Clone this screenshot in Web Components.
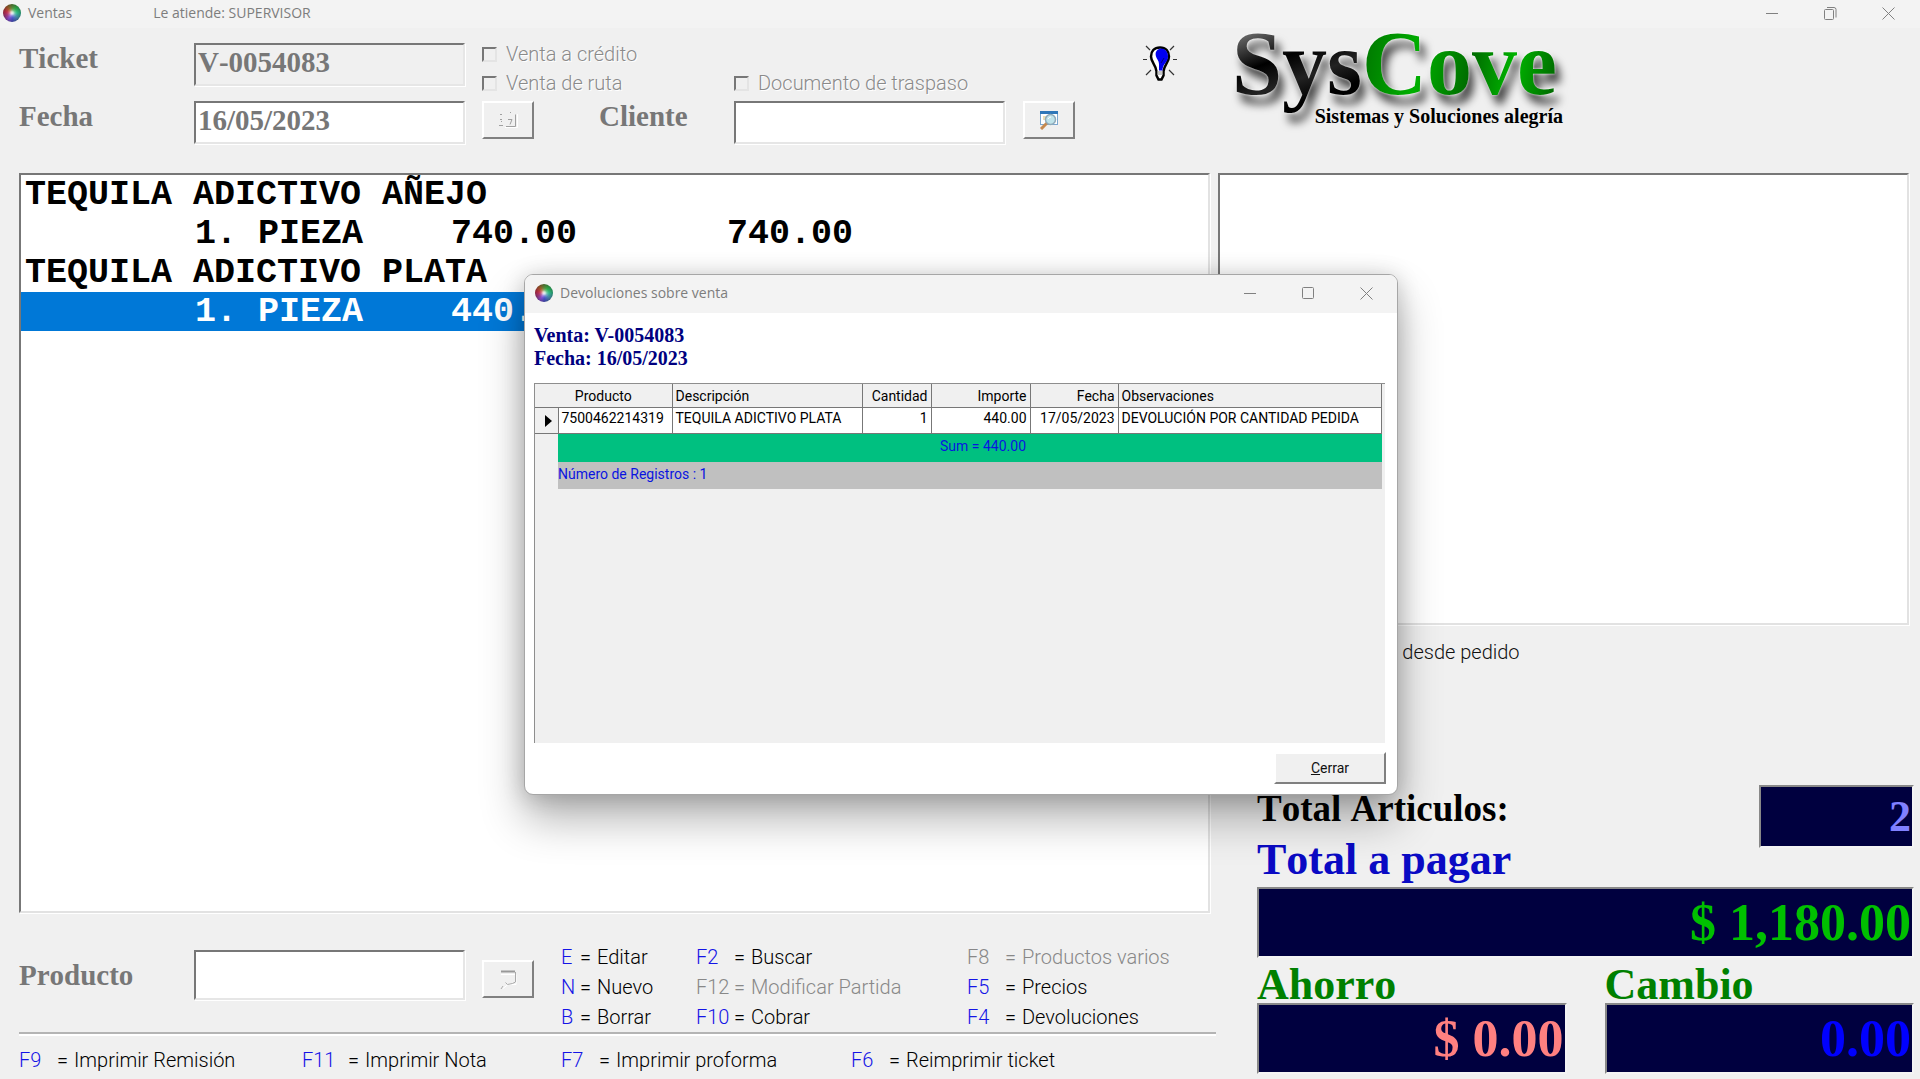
<!DOCTYPE html>
<html lang="es">
<head>
<meta charset="utf-8">
<title>Ventas</title>
<style>
  html, body { margin: 0; height: 100%; }
  body { background: #f0f0f0; font-family: Roboto, "Liberation Sans", sans-serif; color: #111; }
</style>
</head>
<body>
<sales-app></sales-app>

<script>
const define = (name, html, setup) => {
  const tpl = document.createElement('template');
  tpl.innerHTML = html;
  customElements.define(name, class extends HTMLElement {
    connectedCallback() {
      if (this.shadowRoot) return;
      this.attachShadow({ mode: 'open' }).append(tpl.content.cloneNode(true));
      if (setup) setup(this, this.shadowRoot);
    }
  });
};

/* Round colour wheel used as the application icon */
define('color-wheel', `
<style>
  :host { display: block; width: 18px; height: 18px; flex: none; border-radius: 50%;
    background: radial-gradient(circle, #ffffffcc 0 1px, #ffffff44 3px, transparent 5px, #0004 9px),
      conic-gradient(#5a8a3a, #2fae4c 40deg, #2fb98a 90deg, #4a8fb0 130deg, #4a52c8 175deg, #8a4fd0 210deg, #a03a80 245deg, #c0304a 280deg, #a85a2a 320deg, #5a8a3a); }
</style>`);

/* Title bar with icon, captions and window controls */
define('win-bar', `
<style>
  :host { display: flex; align-items: center; height: var(--bar-h, 26px); padding: 0 var(--bar-pad, 25px) 2px var(--bar-left, 3px);
    background: #f3f3f3; color: #7d7d7d; font: 14px/18px "Open Sans", "Noto Sans", sans-serif; flex: none; }
  .texts { display: flex; flex: 1; gap: 81px; margin-left: 7px; }
  .controls { display: flex; gap: 45px; }
  button { all: unset; width: 13px; height: 13px; display: block; }
  svg { display: block; width: 13px; height: 13px; fill: none; stroke: #808080; stroke-width: 1; }
</style>
<color-wheel></color-wheel>
<div class="texts"><slot></slot></div>
<div class="controls">
  <button aria-label="Minimizar"><svg viewBox="0 0 13 13"><path d="M0 6.5H12"/></svg></button>
  <button class="mid" aria-label="Maximizar"></button>
  <button aria-label="Cerrar ventana"><svg viewBox="0 0 13 13"><path d="M.5.5l12 12M12.500.5l-12 12"/></svg></button>
</div>`, (host, root) => {
  root.querySelector('.mid').innerHTML = host.hasAttribute('restored')
    ? '<svg viewBox="0 0 13 13"><rect x=".5" y="2.500" width="9" height="10" rx="1"/><path d="M3 .5h7q2 0 2 2v8"/></svg>'
    : '<svg viewBox="0 0 13 13"><rect x=".5" y=".5" width="11" height="11" rx="1"/></svg>';
});

/* Label with a sunken text box */
define('sunken-field', `
<style>
  :host { display: flex; align-items: flex-start; }
  label { font: bold 29px/1 "Liberation Serif", serif; color: #777; font-kerning: none;
    width: var(--label-w, 175px); line-height: var(--label-h, 30px); flex: none; }
  input { box-sizing: border-box; width: 271px; height: var(--h, 43px); padding: 0 2px 5px; margin: 0; border-radius: 0;
    border: 2px solid; border-color: #777 #e6e6e6 #e6e6e6 #777; box-shadow: 1px 1px 0 #fff; background: #fff;
    font: bold 29px/33px "Liberation Serif", serif; color: #777; outline: none; font-kerning: none; }
  input.flat { background: #f0f0f0; }
</style>
<label for="f"></label><input id="f" type="text">`, (host, root) => {
  root.querySelector('label').textContent = host.getAttribute('label');
  const input = root.querySelector('input');
  input.value = host.getAttribute('value') || '';
  input.className = host.hasAttribute('flat') ? 'flat' : '';
  input.readOnly = host.hasAttribute('value');
});

/* Raised classic button */
define('raised-button', `
<style>
  :host { display: block; width: 52px; height: 38px; flex: none; }
  button { box-sizing: border-box; width: 100%; height: 100%; margin: 0; padding: 0; border-radius: 0; background: #f0f0f0;
    border: 2px solid; border-color: #fff #808080 #808080 #fff; display: flex; align-items: center; justify-content: center;
    font: 14px/18px Roboto, "Liberation Sans", sans-serif; color: #111; }
</style>
<button type="button"><slot></slot></button>`, (host, root) => {
  if (host.getAttribute('label')) root.querySelector('button').setAttribute('aria-label', host.getAttribute('label'));
});

/* Tick box with its caption */
define('tick-option', `
<style>
  :host { display: block; }
  label { display: flex; align-items: center; gap: 9px; font: 300 20px/22px Roboto, "Liberation Sans", sans-serif; color: #111; white-space: nowrap; }
  span { padding-top: 1px; line-height: 21px; }
  :host([disabled]) label { color: #8a8a8a; text-shadow: 1px 1px 0 #fff; }
  input { appearance: none; box-sizing: border-box; width: 15px; height: 15px; margin: 0; border: 2px solid; border-color: #777 #e4e4e4 #e4e4e4 #777; background: #f0f0f0; }
  :host(:not([disabled])) input { background: #fff; }
</style>
<label><input type="checkbox"><span><slot></slot></span></label>`, (host, root) => {
  root.querySelector('input').disabled = host.hasAttribute('disabled');
});

/* Keyboard shortcut hint */
define('key-hint', `
<style>
  :host { display: flex; font: 300 20px/30px Roboto, "Liberation Sans", sans-serif; color: #000; white-space: nowrap; }
  b { font-weight: 300; color: #1414e6; width: var(--key-w, 38px); }
  i { font-style: normal; width: 17px; }
  :host([off]), :host([off]) b { color: #888; }
</style>
<b></b><i>=</i><span><slot></slot></span>`, (host, root) => {
  root.querySelector('b').textContent = host.getAttribute('key');
});

/* Company logotype */
define('company-logo', `
<style>
  :host { display: flex; flex-direction: column; width: 331px; font-family: "Liberation Serif", serif; font-weight: bold; color: #000; }
  .name { font-size: 90px; line-height: 80px; height: 80px; font-kerning: none; white-space: nowrap;
    filter: drop-shadow(0 0 1px #fff) drop-shadow(5px 9px 4px #000000b0); }
  .name span { background: linear-gradient(160deg, #777 12%, #000 38%, #222 55%, #000 70%); -webkit-background-clip: text; background-clip: text; color: transparent; padding-bottom: 16px; }
  .name .g { background-image: linear-gradient(100deg, #007000, #00b000 30%, #006c00 55%, #00b400 75%, #005a00); }
  .tag { font-size: 20px; line-height: 24px; text-align: right; position: relative; }
</style>
<div class="name"><span>Sys</span><span class="g">Cove</span></div>
<div class="tag">Sistemas y Soluciones alegría</div>`);

/* Ticket lines */
define('ticket-line', `
<style>
  :host { display: grid; grid-template-columns: 170px 256px 276px 1fr; height: 39px; padding: 0 4px; white-space: pre;
    font: bold 35px/41px "Liberation Mono", monospace; color: #000; }
  :host([selected]) { background: #0078d7; color: #fff; }
  .title { grid-column: 1 / -1; }
</style>`, (host, root) => {
  const parts = host.getAttribute('cells').split('|');
  const add = (text, cls) => { const s = document.createElement('span'); s.textContent = text; if (cls) s.className = cls; root.append(s); };
  if (parts.length === 1) add(parts[0], 'title'); else { add(''); parts.forEach(p => add(p)); }
});

define('ticket-list', `
<style>
  :host { display: block; box-sizing: border-box; background: #fff; border: 2px solid; border-color: #777 #e2e2e2 #e2e2e2 #777; box-shadow: 1px 1px 0 #fff; }
</style><slot></slot>`);

/* Dark numeric display */
define('led-display', `
<style>
  :host { display: block; }
  output { box-sizing: border-box; display: block; height: var(--h, 71px); line-height: calc(var(--h, 71px) - 4px); padding-right: 1px; text-align: right;
    background: #00003f; color: var(--ink); border: 2px solid; border-color: #888 #f4f4f4 #f4f4f4 #888;
    font-family: "Liberation Serif", serif; font-weight: bold; font-size: var(--size, 52px); }
</style>
<output><slot></slot></output>`);

/* Returns window */
define('returns-window', `
<style>
  :host { display: flex; flex-direction: column; box-sizing: border-box; background: #fff; border: 1px solid #a6a6a6; border-radius: 9px; overflow: hidden;
    box-shadow: 0 24px 44px #0000004d, 0 2px 22px #00000030; }
  win-bar { --bar-h: 36px; --bar-pad: 24px; --bar-left: 10px; }
  .body { flex: 1; display: flex; flex-direction: column; padding: 11px 11px 10px 9px; }
  h2 { margin: 0; font: bold 20px/23px "Liberation Serif", serif; color: #00007f; }
  .grid { flex: 1; margin-top: 13px; margin-right: 1px; background: #f0f0f0; border: solid #8e8e8e; border-width: 1px 0 0 1px; padding-right: 3px; }
  table { border-collapse: collapse; table-layout: fixed; width: 100%; font: 14px/18px Roboto, "Liberation Sans", sans-serif; color: #000; font-weight: 400; }
  th, td { padding: 0 3px; text-align: left; white-space: nowrap; box-sizing: border-box; border-right: 1px solid #777; border-bottom: 1px solid #777; font-weight: 400; }
  th { height: 23px; padding-top: 2px; }
  td { height: 26px; background: #fff; padding-bottom: 4px; }
  .r { text-align: right; } .c { text-align: center; }
  td.mark { background: #f0f0f0; }
  .mark svg { display: block; width: 7px; height: 12px; margin: 5px 0 0 7px; }
  tfoot td { border: 0; color: #0a14e0; height: 29px; padding: 0 4px 3px 0; }
  tfoot td:first-child { background: #f0f0f0; }
  .sum td:not(:first-child) { background: #00c080; }
  .count td { padding-bottom: 4px; height: 27px; }
  .count td:not(:first-child) { background: #c0c0c0; }
  raised-button { align-self: flex-end; width: 112px; height: 32px; margin-top: 9px; }
</style>
<win-bar><span>Devoluciones sobre venta</span></win-bar>
<div class="body">
  <h2>Venta: V-0054083</h2>
  <h2>Fecha: 16/05/2023</h2>
  <div class="grid">
    <table>
      <colgroup><col style="width:23px"><col style="width:114px"><col style="width:190px"><col style="width:69px"><col style="width:99px"><col style="width:88px"><col></colgroup>
      <thead><tr><th class="c" colspan="2">Producto</th><th>Descripción</th><th class="r">Cantidad</th><th class="r">Importe</th><th class="r">Fecha</th><th>Observaciones</th></tr></thead>
      <tbody><tr><td class="mark"><svg viewBox="0 0 7 12"><path d="M0 0l7 6-7 6z"/></svg></td><td>7500462214319</td><td>TEQUILA ADICTIVO PLATA</td><td class="r">1</td><td class="r">440.00</td><td class="r">17/05/2023</td><td>DEVOLUCIÓN POR CANTIDAD PEDIDA</td></tr></tbody>
      <tfoot>
        <tr class="sum"><td></td><td colspan="4" class="r">Sum = 440.00</td><td colspan="2"></td></tr>
        <tr class="count"><td></td><td colspan="6">Número de Registros : 1</td></tr>
      </tfoot>
    </table>
  </div>
  <raised-button><span><u>C</u>errar</span></raised-button>
</div>`);

/* Whole sales screen */
define('sales-app', `
<style>
  :host { display: flex; flex-direction: column; min-height: 100vh; position: relative; overflow: hidden; }
  header { display: flex; align-items: flex-start; padding: 15px 19px 0; height: 130px; flex: none; }
  .stack { display: flex; flex-direction: column; gap: 15px; }
  .options { margin-left: 17px; width: 252px; }
  .options, .client { display: flex; flex-direction: column; gap: 7px; }
  .client { padding-top: 29px; }
  .client sunken-field { --label-w: 135px; margin-left: -135px; }
  .search { margin: 58px 0 0 18px; }
  .bulb { width: 34px; height: 36px; margin: 2px 55px 0 68px; flex: none; }
  company-logo { margin-top: -19px; }
  main { flex: 1; display: grid; grid-template-columns: 1197fr 696fr; column-gap: 2px; padding: 0 6px 0 19px; }
  .left, .right { display: flex; flex-direction: column; min-width: 0; }
  .left ticket-list { flex: 1; margin-right: 6px; }
  .entry { display: flex; align-items: flex-start; margin-top: 29px; height: 90px; }
  .entry sunken-field { --h: 50px; --label-h: 50px; margin-top: 8px; }
  .entry raised-button { margin: 18px 27px 0 17px; }
  .hints { display: grid; grid-template-columns: 135px 271px auto; }
  .hints .short { --key-w: 19px; }
  hr { width: 100%; margin: 0; border: 0; border-top: 2px solid #b4b4b4; border-bottom: 2px solid #fff; }
  .prints { display: grid; grid-template-columns: 283px 259px 290px auto; margin-top: 9px; height: 34px; }
  .prints key-hint { --key-w: 38px; } .prints .wide { --key-w: 46px; }
  .right ticket-list { height: 452px; margin-right: 5px; }
  .right tick-option { margin: 16px 0 0 105px; }
  .totals { margin: 122px 0 4px 39px; }
  .pair { display: grid; grid-template-columns: 1fr 1fr; column-gap: 38px; margin-top: 9px; }
  .top { display: flex; justify-content: space-between; align-items: flex-start; }
  p { margin: 0; font: bold 44px/1 "Liberation Serif", serif; font-kerning: none; }
  .items { font-size: 37px; line-height: 48px; color: #000; }
  .pay { line-height: 54px; color: #0a0ac4; }
  .pair p { line-height: 36px; color: #008000; }
  .top led-display { --h: 63px; --size: 44px; width: 155px; }
  returns-window { position: absolute; left: 524px; top: 274px; width: 874px; height: 521px; }
</style>
<win-bar restored><span>Ventas</span><span>Le atiende: SUPERVISOR</span></win-bar>
<header>
  <div class="stack">
    <sunken-field label="Ticket" value="V-0054083" flat></sunken-field>
    <sunken-field label="Fecha" value="16/05/2023"></sunken-field>
  </div>
  <div class="options">
    <tick-option disabled>Venta a crédito</tick-option>
    <tick-option disabled>Venta de ruta</tick-option>
    <raised-button label="Calendario">
      <svg width="20" height="18" viewBox="0 0 20 18" fill="none" stroke="#a0a0a0"><path d="M2 3.500h2M2 8.500h2M1 14.500h4M3.500 10v1M8 15.500h9.500v-12M10 8.500h4l-2 5M12.500 1v1"/><path d="M7 16.500h12.500V3" stroke="#fff"/></svg>
    </raised-button>
  </div>
  <div class="client">
    <tick-option disabled>Documento de traspaso</tick-option>
    <sunken-field label="Cliente"></sunken-field>
  </div>
  <raised-button class="search" label="Buscar cliente">
    <svg width="20" height="20" viewBox="0 0 20 20"><rect x="1.500" y="1.500" width="17" height="13" fill="#fff" stroke="#7ba7cf"/><path d="M1 1h18v3H1z" fill="#2f77b8"/><path d="M4 6h4v4H4z" fill="#e9dfb6"/><path d="M8 13l-6 6" stroke="#c68a50" stroke-width="3"/><circle cx="11.500" cy="9.500" r="5" fill="#bfe3ea" stroke="#8fa9b8" stroke-width="1.500"/><path d="M9 9q1-2 3-2" stroke="#fff" fill="none"/></svg>
  </raised-button>
  <svg class="bulb" viewBox="0 0 34 36"><path d="M3 1l4 4M31 1l-4 4M0 14.500h4M30 14.500h4M3 30l5-5M31 30l-5-5" stroke="#333" stroke-width="1.200"/><path d="M17 2.500c-6 0-9 4-9 9 0 6 5 8 5.500 15v4l2 4h3l2-4v-4c.5-7 5.500-9 5.500-15 0-5-3-9-9-9z" fill="#fff" stroke="#000" stroke-width="2.500"/><path d="M18 3.500c-5 1-6 4-5 8 1 3 3 4 3 8v6h3.500c0-7 5.500-8 5.500-14C25 7 22 3.500 18 3.500z" fill="#0000f0"/><path d="M14.500 26h5v4h-5z" fill="#c8c8c8"/><path d="M18 18l3-5" stroke="#000080"/></svg>
  <company-logo></company-logo>
</header>
<main>
  <section class="left">
    <ticket-list>
      <ticket-line cells="TEQUILA ADICTIVO AÑEJO"></ticket-line>
      <ticket-line cells="1. PIEZA|740.00|740.00"></ticket-line>
      <ticket-line cells="TEQUILA ADICTIVO PLATA"></ticket-line>
      <ticket-line cells="1. PIEZA|440.00|440.00" selected></ticket-line>
    </ticket-list>
    <div class="entry">
      <sunken-field label="Producto"></sunken-field>
      <raised-button label="Buscar producto">
        <svg width="20" height="20" viewBox="0 0 20 20" fill="none"><path d="M3 5.500h15v10h-8l-5 4" stroke="#fff"/><path d="M3 2.500h14" stroke="#999" stroke-width="2"/><path d="M17.500 3v10l-3 1.500-5 1-2-2M5 17l-2 3" stroke="#aaa"/></svg>
      </raised-button>
      <div class="hints">
        <key-hint class="short" key="E">Editar</key-hint><key-hint key="F2">Buscar</key-hint><key-hint key="F8" off>Productos varios</key-hint>
        <key-hint class="short" key="N">Nuevo</key-hint><key-hint key="F12" off>Modificar Partida</key-hint><key-hint key="F5">Precios</key-hint>
        <key-hint class="short" key="B">Borrar</key-hint><key-hint key="F10">Cobrar</key-hint><key-hint key="F4">Devoluciones</key-hint>
      </div>
    </div>
    <hr>
    <div class="prints">
      <key-hint key="F9">Imprimir Remisión</key-hint><key-hint class="wide" key="F11">Imprimir Nota</key-hint><key-hint key="F7">Imprimir proforma</key-hint><key-hint key="F6">Reimprimir ticket</key-hint>
    </div>
  </section>
  <section class="right">
    <ticket-list></ticket-list>
    <tick-option>Venta desde pedido</tick-option>
    <div class="totals">
      <div class="top">
        <div><p class="items">Total Articulos:</p><p class="pay">Total a pagar</p></div>
        <led-display style="--ink:#8080ff">2</led-display>
      </div>
      <led-display style="--ink:#00c000">$ 1,180.00</led-display>
      <div class="pair">
        <div><p>Ahorro</p><led-display style="--ink:#ff8080">$ 0.00</led-display></div>
        <div><p>Cambio</p><led-display style="--ink:#0000ff">0.00</led-display></div>
      </div>
    </div>
  </section>
</main>
<returns-window></returns-window>`);
</script>
</body>
</html>
